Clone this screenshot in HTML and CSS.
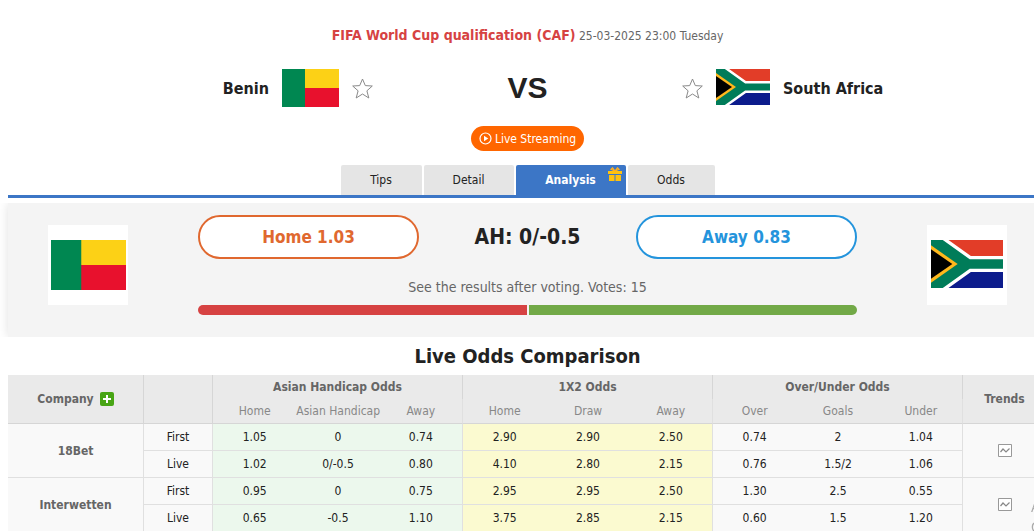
FILE: index.html
```
<!DOCTYPE html>
<html lang="en">
  <head>
    <meta charset="utf-8">
    <title>Benin VS South Africa Analysis</title>
    <link rel="stylesheet" href="styles.css">
  </head>
  <body>
    <!-- Shared icons -->
    <svg class="defs" width="0" height="0">
      <symbol id="benin" viewBox="0 0 57 38" preserveAspectRatio="none">
        <rect width="57" height="38" fill="#fcd116"/>
        <rect y="19" width="57" height="19" fill="#e8112d"/>
        <rect width="23" height="38" fill="#008751"/>
      </symbol>
      <symbol id="safrica" viewBox="0 0 54 36" preserveAspectRatio="none">
        <rect width="54" height="18" fill="#e23d28"/>
        <rect y="18" width="54" height="18" fill="#0c1c8c"/>
        <path d="M0-2L28 18L0 38M26 18H60" fill="none" stroke="#fff" stroke-width="12"/>
        <path d="M0 0L24 18L0 36z" fill="#007c59"/>
        <path d="M0-2L28 18L0 38M26 18H60" fill="none" stroke="#007c59" stroke-width="7"/>
        <path d="M0 4L20 18L0 32z" fill="#ffb81c"/>
        <path d="M0 7L16 18L0 29z" fill="#000"/>
      </symbol>
      <symbol id="star" viewBox="0 0 21 21">
        <path d="M10.500 1L13.300 7.600L20.300 8L14.900 12.800L16.800 20L10.500 16L4.200 20L6.100 12.800L0.700 8L7.700 7.600z" fill="#fff" stroke="#8a8a8a" stroke-linejoin="round"/>
      </symbol>
      <symbol id="trend" viewBox="0 0 14 14">
        <path d="M0.500 0.500H13.500V12.500H0.500z" fill="#fff" stroke="#999"/>
        <path d="M2.500 8L5 5L8 8L11.500 4.500" fill="none" stroke="#888" stroke-width="1.200"/>
      </symbol>
    </svg>

    <div class="wrap">
      <div class="league"><a href="#">FIFA World Cup qualification (CAF)</a> <span>25-03-2025 23:00 Tuesday</span></div>

      <div class="match">
        <div class="team home">
          <a href="#">Benin</a>
          <svg class="flag benin"><use href="#benin"/></svg>
          <button class="fav" aria-label="Follow Benin"><svg width="21" height="21"><use href="#star"/></svg></button>
        </div>
        <div class="vs">VS</div>
        <div class="team">
          <button class="fav" aria-label="Follow South Africa"><svg width="21" height="21"><use href="#star"/></svg></button>
          <svg class="flag safrica"><use href="#safrica"/></svg>
          <a href="#">South Africa</a>
        </div>
      </div>

      <div class="live">
        <a href="#" class="live-btn">
          <svg width="13" height="13" viewBox="0 0 13 13"><circle cx="6.500" cy="6.500" r="5.500" fill="none" stroke="#fff" stroke-width="1.200"/><path d="M5 3.800L9.300 6.500L5 9.200z" fill="#fff"/></svg>
          Live Streaming
        </a>
      </div>

      <nav class="tabs">
        <a href="#" class="tips">Tips</a>
        <a href="#" class="detail">Detail</a>
        <a href="#" class="analysis on">Analysis
          <svg class="gift" width="14" height="15" viewBox="0 0 14 15"><path d="M0 4H14V7H0zM1 8H6.500V14H1zM7.500 8H13V14H7.500z" fill="#ffc20e"/><path d="M7 4L4.500 0.800L3 2.200L7 4L9.500 0.800L11 2.200z" stroke="#ffb020" stroke-width="1.200" fill="none"/></svg>
        </a>
        <a href="#" class="odds-tab">Odds</a>
      </nav>

      <div class="vote">
        <div class="logo"><svg class="logo-benin"><use href="#benin"/></svg></div>
        <div class="vote-main">
          <div class="vote-row">
            <button class="vote-btn vote-home">Home 1.03</button>
            <div class="ah">AH: 0/-0.5</div>
            <button class="vote-btn vote-away">Away 0.83</button>
          </div>
          <p>See the results after voting. Votes: 15</p>
          <div class="bar"><span class="bar-home"></span><span class="bar-away"></span></div>
        </div>
        <div class="logo"><svg class="logo-safrica"><use href="#safrica"/></svg></div>
      </div>

      <h2>Live Odds Comparison</h2>
      <table class="odds">
        <colgroup>
          <col class="c-company"><col class="c-type"><col span="9"><col class="c-trend">
        </colgroup>
        <thead>
          <tr>
            <th rowspan="2"><span class="company">Company <button class="add" aria-label="Add company"><svg width="14" height="14" viewBox="0 0 14 14"><path d="M7 3V11M3 7H11" stroke="#fff" stroke-width="2"/></svg></button></span></th>
            <th rowspan="2"></th>
            <th colspan="3">Asian Handicap Odds</th>
            <th colspan="3">1X2 Odds</th>
            <th colspan="3">Over/Under Odds</th>
            <th rowspan="2">Trends</th>
          </tr>
          <tr class="sub">
            <td>Home</td><td>Asian Handicap</td><td class="end">Away</td>
            <td>Home</td><td>Draw</td><td class="end">Away</td>
            <td>Over</td><td>Goals</td><td class="end">Under</td>
          </tr>
        </thead>
        <tbody>
          <tr>
            <th rowspan="2">18Bet</th><td class="end">First</td>
            <td class="g">1.05</td><td class="g">0</td><td class="g end">0.74</td>
            <td class="y">2.90</td><td class="y">2.90</td><td class="y end">2.50</td>
            <td>0.74</td><td>2</td><td class="end">1.04</td>
            <td rowspan="2"><a href="#" aria-label="Trends"><svg width="14" height="14"><use href="#trend"/></svg></a></td>
          </tr>
          <tr>
            <td class="end">Live</td>
            <td class="g">1.02</td><td class="g">0/-0.5</td><td class="g end">0.80</td>
            <td class="y">4.10</td><td class="y">2.80</td><td class="y end">2.15</td>
            <td>0.76</td><td>1.5/2</td><td class="end">1.06</td>
          </tr>
          <tr>
            <th rowspan="2">Interwetten</th><td class="end">First</td>
            <td class="g">0.95</td><td class="g">0</td><td class="g end">0.75</td>
            <td class="y">2.95</td><td class="y">2.95</td><td class="y end">2.50</td>
            <td>1.30</td><td>2.5</td><td class="end">0.55</td>
            <td rowspan="2"><a href="#" aria-label="Trends"><svg width="14" height="14"><use href="#trend"/></svg></a></td>
          </tr>
          <tr>
            <td class="end">Live</td>
            <td class="g">0.65</td><td class="g">-0.5</td><td class="g end">1.10</td>
            <td class="y">3.75</td><td class="y">2.85</td><td class="y end">2.15</td>
            <td>0.60</td><td>1.5</td><td class="end">1.20</td>
          </tr>
        </tbody>
      </table>
    </div>

    <!-- Overlay cut off by the window edge -->
    <div class="watermark">A<br>G</div>
  </body>
</html>
```
FILE: styles.css
```
body { margin: 0; overflow: hidden; background: #fff; color: #222; font-family: Tahoma, "DejaVu Sans Condensed", "DejaVu Sans", sans-serif; font-size: 12px; }
a { color: inherit; text-decoration: none; }
button { font-family: inherit; cursor: pointer; }
svg { display: block; }
.defs { position: absolute; }

/* runs slightly past the right edge of the window */
.wrap { margin: 0 -13px 0 8px; }

.league { padding-top: 26px; line-height: 18px; text-align: center; color: #666; }
.league a { color: #d64242; font-size: 14px; font-weight: bold; }

.match { display: grid; grid-template-columns: 1fr 309px 1fr; align-items: center; height: 60px; margin-top: 13px; }
.team { display: flex; align-items: center; gap: 13px; font-size: 16px; font-weight: bold; }
.team.home { justify-content: flex-end; }
.fav { padding: 0; border: 0; background: none; }
.flag.benin { width: 57px; height: 38px; }
.flag.safrica { width: 54px; height: 36px; margin-bottom: 2px; }
.vs { text-align: center; font: bold 30px "Liberation Sans", Arial, sans-serif; }

.live { display: flex; justify-content: center; margin-top: 8px; }
.live-btn { display: flex; align-items: center; gap: 3px; height: 25px; padding: 0 8px; border-radius: 13px; background: #ff6600; color: #fff; }

.tabs { display: flex; justify-content: center; gap: 2px; margin-top: 14px; border-bottom: 3px solid #3c76c6; }
.tabs a { position: relative; line-height: 30px; text-align: center; background: #e5e5e5; border-radius: 2px 2px 0 0; }
.tabs .tips { width: 81px; }
.tabs .detail { width: 90px; }
.tabs .analysis { width: 110px; }
.tabs .odds-tab { width: 87px; }
.tabs a.on { background: #3c76c6; color: #fff; font-weight: bold; }
.gift { position: absolute; top: 2px; right: 4px; }

.vote { display: flex; justify-content: space-between; gap: 70px; height: 134px; margin-top: 5px; padding: 0 40px; background: #f4f4f4; box-shadow: 0 0 10px rgba(0, 0, 0, 0.12); clip-path: inset(0 -8px); box-sizing: border-box; }
.logo { display: flex; align-items: center; justify-content: center; width: 80px; height: 80px; margin-top: 22px; background: #fff; }
.logo-benin { width: 75px; height: 50px; }
.logo-safrica { width: 72px; height: 48px; margin-bottom: 2px; }
.vote-main { flex: 1; padding-top: 12px; text-align: center; }
.vote-row { display: flex; align-items: center; justify-content: space-between; }
.vote-btn { width: 221px; height: 44px; border: 2px solid; border-radius: 22px; background: #fff; font-size: 17px; font-weight: bold; }
.vote-home { color: #e0682f; border-color: #e0682f; }
.vote-away { color: #2494dc; border-color: #2494dc; }
.ah { font-size: 21px; font-weight: bold; }
.vote p { margin: 18px 0 8px; line-height: 20px; font-size: 14px; color: #666; }
.bar { display: flex; gap: 2px; height: 10px; border-radius: 5px; overflow: hidden; }
.bar span { flex: 1; }
.bar-home { background: #d64242; }
.bar-away { background: #72a947; }

h2 { margin: 0; line-height: 38px; font-size: 20px; text-align: center; }

.odds { width: 100%; table-layout: fixed; border-collapse: separate; border-spacing: 0; text-align: center; }
.c-company { width: 136px; }
.c-type { width: 69px; }
.c-trend { width: 84px; }
.odds th, .odds td { padding: 0; height: 26px; border-bottom: 1px solid #e0e0e0; background: #f9f9f9; white-space: nowrap; }
.odds th { border-right: 1px solid #e0e0e0; color: #666; }
.odds .end { border-right: 1px solid #e0e0e0; }
.odds thead th, .odds thead td { background: #eaeaea; border-color: #d6d6d6; }
.odds thead th { height: 25px; }
.odds thead th[colspan] { height: 24px; border-bottom: 0; }
.odds thead .sub td { height: 24px; color: #888; }
.odds .g { background: #ecf8ed; }
.odds .y { background: #fbfad0; }
.odds td svg { margin: 0 auto; }
.company { display: inline-flex; align-items: center; gap: 6px; }
.add { padding: 0; border: 0; border-radius: 2px; background: #48a515; }

.watermark { position: fixed; right: -8px; bottom: -6px; width: 11px; line-height: 20px; font-size: 14px; color: #aaa; }
```
